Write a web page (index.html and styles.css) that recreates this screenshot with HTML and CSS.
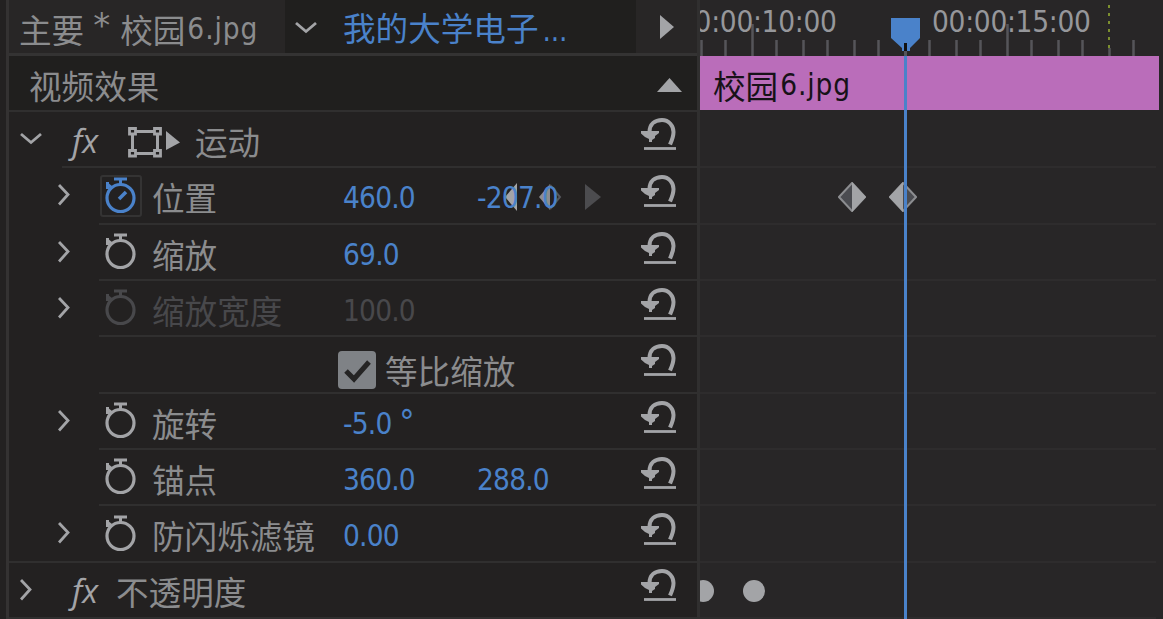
FILE: index.html
```html
<!DOCTYPE html>
<html lang="zh-CN">
<head>
    <meta charset="UTF-8">
    <title>视频效果</title>
    <link rel="stylesheet" href="styles.css">
</head>
<body>
    <svg class="symbols">
        <symbol id="right" viewBox="0 0 12 22"><path d="M1 1 L10 10.5 L1 20.5" fill="none" stroke="#a3a4a7" stroke-width="2.8"/></symbol>
        <symbol id="down" viewBox="0 0 24 14"><path d="M2 2 L12 10.5 L22 2" fill="none" stroke="#a3a4a7" stroke-width="2.8"/></symbol>
        <symbol id="watch" viewBox="0 0 32 37">
            <circle cx="15.5" cy="21" r="13.5" fill="none" stroke="currentColor" stroke-width="3.2"/>
            <path d="M9 2 H22 M15.5 2 V7 M2.500 5 V12 M2 7 L7 11" fill="none" stroke="currentColor" stroke-width="3"/>
        </symbol>
        <symbol id="reset" viewBox="0 0 36 33">
            <path d="M8.500 14 C8.500 6 14 2 21 2 C28 2 32.500 8 32.500 14 C32.500 19 31 22 29 26.500" fill="none" stroke="#a3a4a7" stroke-width="4"/>
            <path d="M0 13 H18 V15 L14 18 V20 L11 22 V24 H8 V21 L4 19 L0 15.500 Z" fill="#a3a4a7"/>
            <path d="M3 30.500 H35" stroke="#a3a4a7" stroke-width="2.800"/>
        </symbol>
    </svg>
    <div class="app">
        <div class="gutter"></div>
        <div class="effects">
            <div class="tabs">
                <div class="tab source">主要<span class="star">*</span>校园<span class="latin file">6.jpg</span></div>
                <div class="tab sequence"><svg class="down"><use href="#down"/></svg><span class="name">我的大学电子<span class="latin dots">...</span></span></div>
                <div class="tab play"><svg width="14" height="24"><path d="M0 0 L14 12 L0 24 Z" fill="#a3a4a7"/></svg></div>
            </div>
            <div class="row section">
                <span>视频效果</span>
                <svg width="25" height="14"><path d="M12.5 0 L25 14 H0 Z" fill="#a3a4a7"/></svg>
            </div>
            <div class="row effect motion">
                <svg class="down"><use href="#down"/></svg>
                <span class="fx">fx</span>
                <svg class="transform" width="52" height="32" fill="none" stroke="#a3a4a7" stroke-width="3">
                    <path d="M7 5.500 H27 M7 27.500 H27 M4.500 8 V25 M29.500 8 V25"/>
                    <path d="M1.500 2.500 H7.500 V8 H1.500 Z M26.500 2.500 H32.500 V8 H26.500 Z M1.500 24.500 H7.500 V30 H1.500 Z M26.500 24.500 H32.500 V30 H26.500 Z" fill="#232121" stroke-width="2.800"/>
                    <path d="M38 5 L52 16.500 L38 24 Z" fill="#a3a4a7" stroke="none"/>
                </svg>
                <span>运动</span>
                <svg class="reset"><use href="#reset"/></svg>
            </div>
            <div class="row prop">
                <svg class="right"><use href="#right"/></svg>
                <span class="watch-box"><svg class="watch active"><use href="#watch"/><path d="M14 22 L21 15" stroke="#4a82ca" stroke-width="3.5"/></svg></span>
                <span class="label">位置</span>
                <span class="value">460.0</span>
                <span class="value second">
                    <svg class="keynav" width="102" height="28">
                        <path d="M15 0 V28 L3 14 Z" fill="#a3a4a7"/>
                        <path d="M48 1 L37 14 L48 27 Z" fill="#8c8d90"/>
                        <path d="M48 2 L58 14 L48 26" fill="none" stroke="#56575c" stroke-width="2"/>
                        <path d="M83 1 L99 14 L83 27 Z" fill="#4c4c4f"/>
                    </svg>
                    <span class="over">-207.0</span>
                </span>
                <svg class="reset"><use href="#reset"/></svg>
            </div>
            <div class="row prop">
                <svg class="right"><use href="#right"/></svg>
                <svg class="watch"><use href="#watch"/></svg>
                <span class="label">缩放</span>
                <span class="value">69.0</span>
                <svg class="reset"><use href="#reset"/></svg>
            </div>
            <div class="row prop disabled">
                <svg class="right"><use href="#right"/></svg>
                <svg class="watch"><use href="#watch"/></svg>
                <span class="label">缩放宽度</span>
                <span class="value">100.0</span>
                <svg class="reset"><use href="#reset"/></svg>
            </div>
            <div class="row prop">
                <span class="check">
                    <svg width="38" height="38"><rect width="38" height="38" rx="4" fill="#7f8286"/><path d="M8 20 L16 28 L31 11" fill="none" stroke="#252424" stroke-width="5"/></svg>
                    等比缩放
                </span>
                <svg class="reset"><use href="#reset"/></svg>
            </div>
            <div class="row prop">
                <svg class="right"><use href="#right"/></svg>
                <svg class="watch"><use href="#watch"/></svg>
                <span class="label">旋转</span>
                <span class="value">-5.0 <span class="degree">°</span></span>
                <svg class="reset"><use href="#reset"/></svg>
            </div>
            <div class="row prop">
                <svg class="watch"><use href="#watch"/></svg>
                <span class="label">锚点</span>
                <span class="value">360.0</span>
                <span class="value second">288.0</span>
                <svg class="reset"><use href="#reset"/></svg>
            </div>
            <div class="row prop last">
                <svg class="right"><use href="#right"/></svg>
                <svg class="watch"><use href="#watch"/></svg>
                <span class="label">防闪烁滤镜</span>
                <span class="value">0.00</span>
                <svg class="reset"><use href="#reset"/></svg>
            </div>
            <div class="row effect opacity">
                <svg class="right"><use href="#right"/></svg>
                <span class="fx">fx</span>
                <span>不透明度</span>
                <svg class="reset"><use href="#reset"/></svg>
            </div>
        </div>
        <div class="timeline">
            <div class="ruler">
                <svg width="463" height="56">
                    <path d="M1.500 40V56 M25.500 40V56 M52.500 24V56 M76.500 40V56 M103.500 40V56 M127.500 40V56 M154.500 40V56 M178.500 40V56 M205.500 40V56 M229.500 40V56 M256.500 40V56 M280.500 40V56 M307.500 24V56 M331.500 40V56 M358.500 40V56 M382.500 40V56 M409.500 48V56 M433.500 40V56" stroke="#55555a" stroke-width="2.500"/>
                    <path d="M409 5 V48" stroke="#7c8f2f" stroke-width="2" stroke-dasharray="3 5"/>
                </svg>
                <span class="time t10">00:00:10:00</span>
                <span class="time t15">00:00:15:00</span>
            </div>
            <div class="clip">校园<span class="latin file">6.jpg</span></div>
            <div class="lane"></div>
            <div class="lane">
                <svg class="key k1" width="28" height="30"><path d="M14 1 L27 15 L14 29 L1 15 Z" fill="#4b4c51" stroke="#8c8d90" stroke-width="2"/><path d="M14 0 L28 15 L14 30 Z" fill="#a3a4a7"/></svg>
                <svg class="key k2" width="28" height="30"><path d="M14 1 L27 15 L14 29 L1 15 Z" fill="#4b4c51" stroke="#8c8d90" stroke-width="2"/><path d="M14 0 L0 15 L14 30 Z" fill="#a3a4a7"/></svg>
            </div>
            <div class="lane"></div>
            <div class="lane"></div>
            <div class="lane"></div>
            <div class="lane"></div>
            <div class="lane"></div>
            <div class="lane"></div>
            <div class="lane"><span class="dot d1"></span><span class="dot d2"></span></div>
            <svg class="playhead" width="30" height="619"><path d="M0 18 H29 V38 L19 48 V51 H11 V48 L0 38 Z" fill="#4a82ca"/><path d="M14.500 43 V51" stroke="#111" stroke-width="3"/><path d="M14.500 51 V56" stroke="#55555a" stroke-width="3"/><path d="M14.500 56 V619" stroke="#4a82ca" stroke-width="3"/></svg>
        </div>
    </div>
</body>
</html>
```

FILE: styles.css
```css
body {
    margin: 0;
    background: #232121;
    color: #8b8c8e;
    font: 32.6px/54px "Noto Sans CJK SC", sans-serif;
    overflow: hidden;
}

svg {
    display: block;
    flex: none;
}

.symbols {
    position: absolute;
    width: 0;
    height: 0;
}

.app {
    display: flex;
    height: 619px;
    white-space: nowrap;
}

.gutter {
    width: 6px;
    border-right: 3px solid #343232;
}

.effects {
    width: 688px;
    border-right: 3px solid #302f2f;
}

.latin,
.value,
.time {
    font-family: "DejaVu Sans Condensed", "DejaVu Sans", sans-serif;
    font-stretch: condensed;
    font-size: 29.5px;
    letter-spacing: -0.8px;
}

.latin {
    margin-left: 2px;
}

.file {
    letter-spacing: 0.9px;
}

/* tabs */
.tabs {
    display: flex;
    height: 53px;
    border-bottom: 3px solid #343333;
    background: #282626;
}

.tab {
    display: flex;
    align-items: center;
    height: 53px;
    box-sizing: border-box;
}

.source {
    width: 276px;
    padding: 4px 0 0 10px;
}

.star {
    width: 36px;
    padding-left: 9px;
    box-sizing: border-box;
    font-family: "DejaVu Sans", sans-serif;
    font-size: 34px;
    line-height: 44px;
    margin-top: -8px;
}

.sequence {
    width: 351px;
    padding-left: 9px;
    background: #201f1e;
}

.sequence > .down {
    margin-top: 3px;
}

.sequence .name {
    padding: 4px 0 0 25px;
    color: #4a82ca;
}

.dots {
    margin-left: 4px;
    letter-spacing: -0.2px;
}

.play {
    padding-left: 24px;
}

/* effect rows */
.row {
    display: flex;
    align-items: center;
    position: relative;
    height: 56.33px;
    box-sizing: border-box;
    padding: 1px 20px 0 0;
    background: linear-gradient(#302f2f, #302f2f) no-repeat right bottom / 100% 2px;
}

.section {
    height: 56px;
    justify-content: space-between;
    padding: 1px 15px 0 20px;
    background-color: #201f1e;
}

.motion {
    background-size: 635px 2px;
}

.down {
    width: 24px;
    height: 14px;
}

.right {
    width: 12px;
    height: 22px;
}

.effect .down {
    margin: -3px 0 0 10px;
}

.effect .right {
    margin: -2px 12px 0 11px;
}

.fx {
    width: 46px;
    margin-left: 29px;
    font: italic 33px/54px "Open Sans", sans-serif;
    color: #a3a4a7;
}

.transform {
    margin: 2px 15px 0 10px;
}

.opacity .fx {
    margin-left: 28px;
    width: 44px;
}

.reset {
    width: 36px;
    height: 33px;
    margin-top: -12px;
    margin-left: auto;
}

.prop {
    display: grid;
    grid-template-columns: 49px 42px 52px 191px 134px 1fr 36px;
    grid-template-rows: 54px;
    padding-top: 2px;
    background-size: 598px 2px;
}

.last {
    background-size: 100% 2px;
}

.prop .right {
    grid-column: 2;
    margin-top: -4px;
}

.watch {
    grid-column: 3;
    width: 32px;
    height: 37px;
    margin: -4px 0 0 5px;
    color: #a3a4a7;
}

.watch-box {
    grid-column: 3;
    width: 38px;
    height: 38px;
    border: 2px solid #343333;
    border-radius: 3px;
    margin-top: -3px;
}

.watch-box .watch {
    margin: 0 0 0 3px;
    color: #4a82ca;
}

.label {
    grid-column: 4;
}

.value {
    grid-column: 5;
    padding-top: 2px;
    color: #4a82ca;
}

.degree {
    font-size: 34px;
    line-height: 1;
}

.second {
    grid-column: 6;
    position: relative;
}

.keynav {
    position: absolute;
    left: 25px;
    top: 14px;
}

.over {
    position: relative;
}

.prop .reset {
    grid-column: 7;
    margin-top: -11px;
}

.disabled .watch,
.disabled .label,
.disabled .value {
    color: #48484b;
}

.check {
    grid-column: 5 / 7;
    display: flex;
    align-items: center;
    gap: 9px;
    margin: 0 0 -4px -5px;
    padding-top: 4px;
}

/* timeline */
.timeline {
    position: relative;
    flex: 1;
    overflow: hidden;
    background: #282627;
}

.ruler {
    position: relative;
    height: 56px;
}

.time {
    position: absolute;
    top: -5px;
    color: #96979b;
    letter-spacing: -0.3px;
}

.t10 {
    left: -22px;
}

.t15 {
    left: 232px;
}

.clip {
    display: flex;
    align-items: center;
    height: 54px;
    margin: 0 4px 2px 0;
    padding: 4px 0 0 13px;
    box-sizing: border-box;
    background: #ba6dba;
    color: #171218;
}

.lane {
    position: relative;
    height: 56.33px;
    background: linear-gradient(#2e2c2d, #2e2c2d) no-repeat left bottom / 456px 2px;
}

.key {
    position: absolute;
    top: 14px;
}

.k1 {
    left: 138px;
}

.k2 {
    left: 189px;
}

.dot {
    position: absolute;
    top: 17px;
    width: 22px;
    height: 22px;
    border-radius: 50%;
    background: #a3a4a7;
}

.d1 {
    left: -8px;
}

.d2 {
    left: 43px;
}

.playhead {
    position: absolute;
    left: 191px;
    top: 0;
}
```
